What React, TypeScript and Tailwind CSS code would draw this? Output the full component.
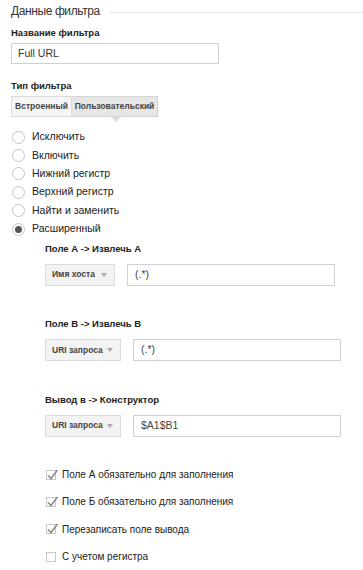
const font = { fontFamily: '"Liberation Sans", Arial, sans-serif' };

function Radio({ label, checked }: { label: string; checked?: boolean }) {
  return (
    <div className="flex h-[18.4px] items-center gap-[7px]">
      <span className="flex h-[13px] w-[13px] items-center justify-center rounded-full border border-[#c4c4c4] bg-white">
        {checked && <span className="h-[7px] w-[7px] rounded-full bg-[#555]" />}
      </span>
      <span className="text-[10.5px] text-[#222]">{label}</span>
    </div>
  );
}

function Check({ label, checked }: { label: string; checked?: boolean }) {
  return (
    <div className="flex h-[27.4px] items-center gap-[6px]">
      <span className="relative h-[10px] w-[10px] border border-[#c8c8c8] bg-white">
        {checked && (
          <svg className="absolute -left-[1px] -top-[3px]" width="13" height="13" viewBox="0 0 13 13">
            <path d="M2 7.5 L5 10.5 L11.5 2" fill="none" stroke="#8a8a8a" strokeWidth="1.6" />
          </svg>
        )}
      </span>
      <span className="text-[10px] text-[#222]">{label}</span>
    </div>
  );
}

function Extract({
  label,
  select,
  value,
  selW,
}: {
  label: string;
  select: string;
  value: string;
  selW: string;
}) {
  return (
    <div className="flex flex-col">
      <div className="text-[9.5px] font-bold leading-[14px] text-[#222]">{label}</div>
      <div className="mt-[8px] flex items-center gap-[12px]">
        <div
          className={`flex h-[22px] ${selW} items-center justify-between whitespace-nowrap border border-[#dcdcdc] bg-[#f3f3f3] pl-[6px] pr-[7px]`}
        >
          <span className="text-[8.5px] font-bold text-[#444]">{select}</span>
          <span className="h-0 w-0 border-x-[3.5px] border-t-[4px] border-x-transparent border-t-[#aaa]" />
        </div>
        <div className="flex h-[22px] w-[208px] items-center border border-[#d0d0d0] bg-white px-[7px] text-[10.5px] text-[#444]">
          {value}
        </div>
      </div>
    </div>
  );
}

export default function App() {
  return (
    <div className="h-[570px] w-[363px] overflow-hidden bg-white" style={font}>
      <div className="flex h-[22px] items-center pl-[11px]">
        <span className="text-[12px] tracking-[-0.4px] text-[#333]">Данные фильтра</span>
        <span className="ml-[9px] mt-[2px] h-px flex-1 bg-[#e0e0e0]" />
      </div>
      <div className="px-[11px]">
        <div className="mt-[4px] text-[9.5px] font-bold leading-[14px] text-[#222]">Название фильтра</div>
        <div className="mt-[3px] flex h-[21px] w-[208px] items-center border border-[#d0d0d0] px-[6px] text-[10.5px] text-[#333]">
          Full URL
        </div>
        <div className="mt-[15px] text-[9.5px] font-bold leading-[14px] text-[#222]">Тип фильтра</div>
        <div className="relative mt-[3px] flex h-[21px] whitespace-nowrap">
          <div className="flex w-[61px] items-center justify-center border border-[#dcdcdc] bg-[#f6f6f6] text-[8.5px] font-bold text-[#444]">
            Встроенный
          </div>
          <div className="flex w-[86px] items-center justify-center border border-l-0 border-[#d4d4d4] bg-[#e6e6e6] text-[8.5px] font-bold text-[#444]">
            Пользовательский
          </div>
          <span className="absolute left-[100px] top-[21px] h-0 w-0 border-x-[5px] border-t-[5px] border-x-transparent border-t-[#dadada]" />
        </div>
        <div className="mt-[11px] flex flex-col pl-[1px]">
          <Radio label="Исключить" />
          <Radio label="Включить" />
          <Radio label="Нижний регистр" />
          <Radio label="Верхний регистр" />
          <Radio label="Найти и заменить" />
          <Radio label="Расширенный" checked />
        </div>
      </div>
      <div className="mt-[3.5px] flex flex-col gap-[31.5px] pl-[45px]">
        <Extract label="Поле А -> Извлечь А" select="Имя хоста" value="(.*)" selW="w-[70px]" />
        <Extract label="Поле B -> Извлечь B" select="URI запроса" value="(.*)" selW="w-[76px]" />
        <Extract label="Вывод в -> Конструктор" select="URI запроса" value="$A1$B1" selW="w-[76px]" />
      </div>
      <div className="mt-[24px] flex flex-col pl-[46px]">
        <Check label="Поле А обязательно для заполнения" checked />
        <Check label="Поле Б обязательно для заполнения" checked />
        <Check label="Перезаписать поле вывода" checked />
        <Check label="С учетом регистра" />
      </div>
    </div>
  );
}
